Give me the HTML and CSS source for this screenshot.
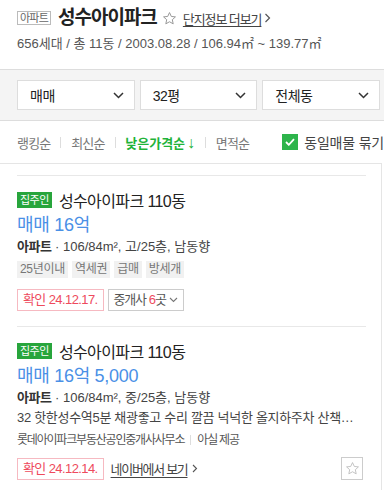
FILE: index.html
```html
<!DOCTYPE html>
<html lang="ko">
<head>
    <meta charset="UTF-8">
    <meta name="viewport" content="width=device-width, initial-scale=1.0">
    <title>성수아이파크</title>
    <link rel="stylesheet" href="styles.css">
</head>
<body>
    <div class="complex">
        <div class="complex-title">
            <span class="type-badge">아파트</span>
            <h1>성수아이파크</h1>
            <svg class="fav" width="15" height="15" viewBox="0 0 24 24"><path d="M12 2.5l2.9 6.2 6.6.7-5 4.5 1.4 6.6L12 17.2l-5.9 3.3 1.4-6.6-5-4.5 6.6-.7z" fill="none" stroke="#999" stroke-width="1.6" stroke-linejoin="round"/></svg>
            <a class="more" href="#">단지정보 더보기<svg width="7" height="10" viewBox="0 0 7 10"><path d="M1.5 1l4 4-4 4" fill="none" stroke="#555" stroke-width="1.2"/></svg></a>
        </div>
        <p class="complex-info">656세대 / 총 11동 / 2003.08.28 / 106.94㎡ ~ 139.77㎡</p>
    </div>

    <div class="filter-bar">
        <div class="select">매매<svg width="11" height="7" viewBox="0 0 11 7"><path d="M1 1l4.5 4.5L10 1" fill="none" stroke="#333" stroke-width="1.5"/></svg></div>
        <div class="select">32평<svg width="11" height="7" viewBox="0 0 11 7"><path d="M1 1l4.5 4.5L10 1" fill="none" stroke="#333" stroke-width="1.5"/></svg></div>
        <div class="select">전체동<svg width="11" height="7" viewBox="0 0 11 7"><path d="M1 1l4.5 4.5L10 1" fill="none" stroke="#333" stroke-width="1.5"/></svg></div>
    </div>

    <div class="sort-bar">
        <span class="sort">랭킹순</span>
        <span class="sort-sep"></span>
        <span class="sort">최신순</span>
        <span class="sort-sep"></span>
        <span class="sort active">낮은가격순<i>↓</i></span>
        <span class="sort-sep"></span>
        <span class="sort">면적순</span>
        <label class="same">
            <span class="check"><svg width="10" height="8" viewBox="0 0 10 8"><path d="M1 4l2.8 2.8L9 1.2" fill="none" stroke="#fff" stroke-width="1.8"/></svg></span>
            동일매물 묶기
        </label>
    </div>

    <div class="list">
        <div class="item">
            <div class="item-title"><span class="owner">집주인</span>성수아이파크 110동</div>
            <div class="price">매매 16억</div>
            <div class="spec"><b>아파트</b> · 106/84m², 고/25층, 남동향</div>
            <div class="tags">
                <span class="tag">25년이내</span>
                <span class="tag">역세권</span>
                <span class="tag">급매</span>
                <span class="tag">방세개</span>
            </div>
            <div class="actions">
                <span class="confirm">확인 24.12.17.</span>
                <span class="agents">중개사 <em>6</em>곳<svg width="9" height="6" viewBox="0 0 9 6"><path d="M1 1l3.5 3.5L8 1" fill="none" stroke="#777" stroke-width="1.1"/></svg></span>
            </div>
        </div>
        <div class="item">
            <div class="item-title"><span class="owner">집주인</span>성수아이파크 110동</div>
            <div class="price">매매 16억 5,000</div>
            <div class="spec"><b>아파트</b> · 106/84m², 중/25층, 남동향</div>
            <div class="desc">32 핫한성수역5분 채광좋고 수리 깔끔 넉넉한 올지하주차 산책…</div>
            <div class="realtor">롯데아이파크부동산공인중개사사무소<span class="bar"></span>아실 제공</div>
            <div class="actions">
                <span class="confirm">확인 24.12.14.</span>
                <a class="naver" href="#">네이버에서 보기<svg width="6" height="9" viewBox="0 0 6 9"><path d="M1 1l3.5 3.5L1 8" fill="none" stroke="#555" stroke-width="1.1"/></svg></a>
                <span class="star-box"><svg width="15" height="15" viewBox="0 0 24 24"><path d="M12 2.5l2.9 6.2 6.6.7-5 4.5 1.4 6.6L12 17.2l-5.9 3.3 1.4-6.6-5-4.5 6.6-.7z" fill="none" stroke="#bbb" stroke-width="1.4" stroke-linejoin="round"/></svg></span>
            </div>
        </div>
    </div>
</body>
</html>
```

FILE: styles.css
```css
body { margin: 0; font-family: "Liberation Sans", "Noto Sans CJK KR", sans-serif; color: #333; background: #fff; overflow: hidden; }
a { color: inherit; text-decoration: none; }

.complex { padding: 8px 17px 0; height: 69px; box-sizing: border-box; }
.complex-title { display: flex; align-items: center; height: 20px; }
.type-badge { font-size: 11px; line-height: 12px; color: #666; border: 1px solid #bbb; padding: 0 2px; letter-spacing: -0.8px; }
.complex-title h1 { margin: 0 0 0 7px; font-size: 19px; font-weight: bold; color: #222; letter-spacing: -1px; line-height: 20px; }
.fav { margin-left: 5px; }
.more { margin-left: 6px; font-size: 13px; color: #444; text-decoration: underline; text-underline-offset: 2px; letter-spacing: -1.1px; display: flex; align-items: center; gap: 3px; }
.complex-info { margin: 7px 0 0; font-size: 13px; line-height: 18px; color: #555; letter-spacing: 0; }

.filter-bar { background: #f4f4f4; border-top: 1px solid #ddd; border-bottom: 1px solid #ddd; padding: 10px 4px 10px 17px; display: grid; grid-template-columns: 1fr 1fr 1fr; gap: 5px; }
.select { height: 30px; box-sizing: border-box; background: #fff; border: 1px solid #ddd; display: flex; align-items: center; justify-content: space-between; padding: 0 10px 0 12px; font-size: 14px; color: #222; letter-spacing: -0.5px; }

.sort-bar { height: 42px; display: flex; align-items: center; padding-left: 17px; font-size: 13px; letter-spacing: -0.8px; white-space: nowrap; }
.sort { color: #777; }
.sort.active { color: #1fb33a; font-weight: bold; letter-spacing: 0; }
.sort.active i { font-style: normal; font-weight: normal; font-size: 16px; margin-left: 2px; }
.sort-sep { width: 1px; height: 11px; background: #ddd; margin: 0 10px; }
.same { margin-left: 33px; display: flex; align-items: center; gap: 6px; color: #444; font-size: 14px; letter-spacing: -0.2px; }
.check { width: 16px; height: 16px; background: #2db44b; display: flex; align-items: center; justify-content: center; }

.list { width: 382px; box-sizing: border-box; border-top: 1px solid #e5e5e5; border-right: 1px solid #e5e5e5; padding: 11px 15px 0 17px; }
.item { border-top: 1px solid #e8e8e8; padding: 14px 0 15px; }
.item-title { display: flex; align-items: center; height: 20px; font-size: 16px; color: #222; letter-spacing: -0.6px; }
.owner { background: #28a53c; color: #fff; font-size: 11px; line-height: 16px; padding: 0 3px; margin-right: 7px; letter-spacing: -0.5px; }
.price { margin-top: 3px; font-size: 18px; line-height: 24px; color: #4a90e6; letter-spacing: -0.3px; }
.spec { font-size: 13px; line-height: 20px; color: #444; letter-spacing: 0; }
.spec b { color: #333; letter-spacing: -0.5px; }
.tags { margin-top: 4px; display: flex; gap: 4px; }
.tag { background: #f1f1f1; color: #777; font-size: 12px; line-height: 17px; padding: 0 3px; letter-spacing: -0.3px; }
.desc { font-size: 13px; line-height: 20px; color: #444; letter-spacing: -0.3px; white-space: nowrap; }
.realtor { margin-top: 2px; font-size: 12px; line-height: 20px; color: #555; letter-spacing: -1.2px; display: flex; align-items: center; }
.bar { width: 1px; height: 10px; background: #ddd; margin: 0 6px; }
.actions { margin-top: 11px; display: flex; align-items: center; gap: 4px; }
.item:last-child .actions { margin-top: 7px; }
.confirm { height: 22px; box-sizing: border-box; border: 1px solid #f6b9c1; color: #ee4a5d; font-size: 13px; line-height: 20px; padding: 0 5px; letter-spacing: -0.6px; }
.agents { height: 22px; box-sizing: border-box; border: 1px solid #ccc; color: #555; font-size: 13px; line-height: 20px; padding: 0 5px; display: flex; align-items: center; gap: 3px; letter-spacing: -1.2px; }
.agents em { font-style: normal; color: #ee4a5d; margin: 0 -3px 0 0; }
.naver { margin-left: 3px; font-size: 13px; color: #444; text-decoration: underline; text-underline-offset: 3px; letter-spacing: -1.3px; display: flex; align-items: center; gap: 4px; }
.star-box { margin-left: auto; width: 22px; height: 23px; box-sizing: border-box; border: 1px solid #ccc; display: flex; align-items: center; justify-content: center; margin-right: 3px; }
```
